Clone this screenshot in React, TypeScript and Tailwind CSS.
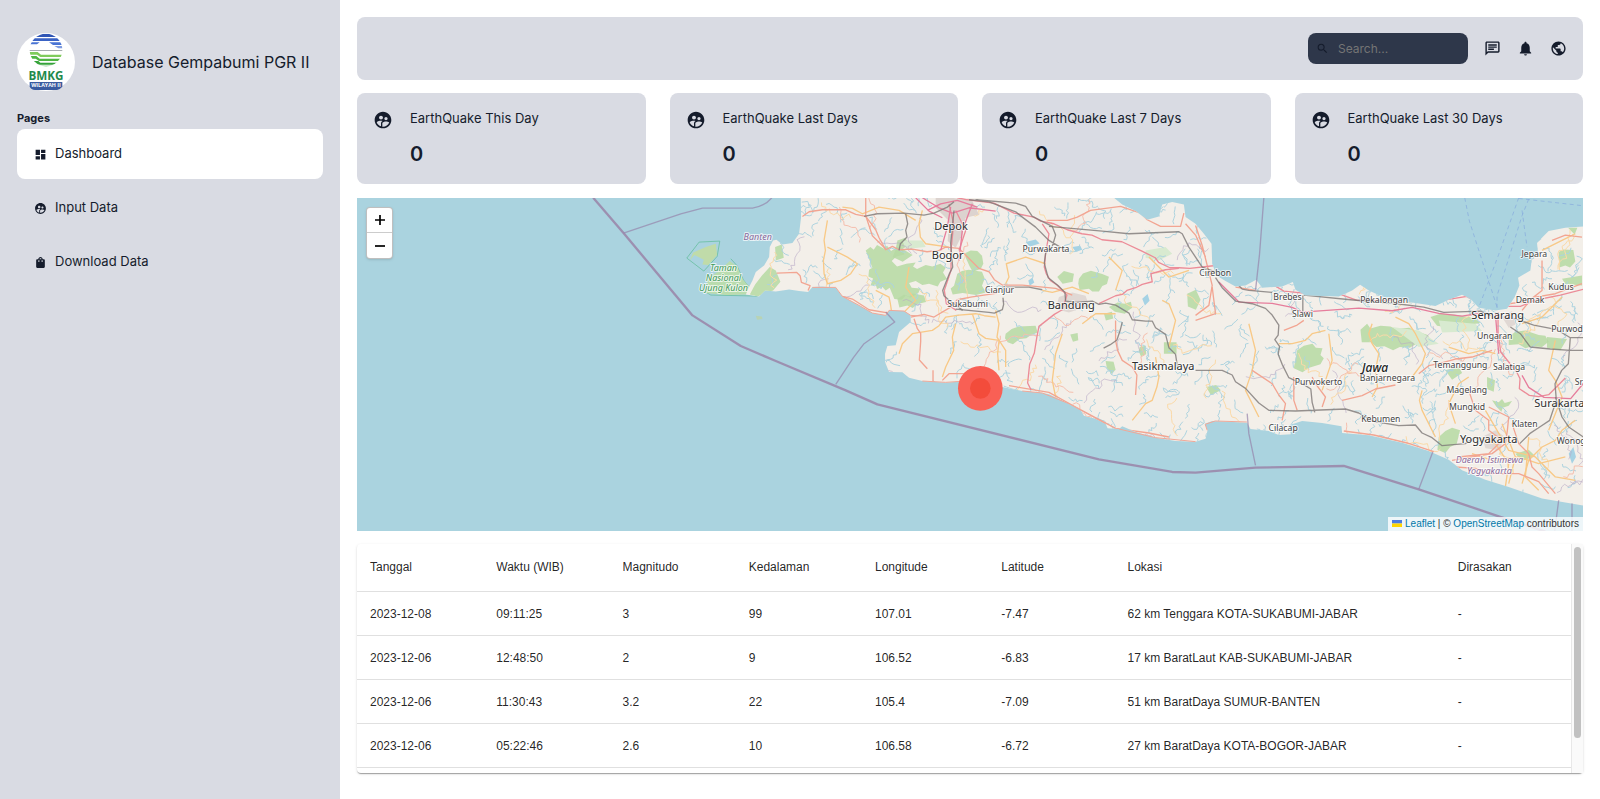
import React from "react";
import {
  MdDashboard,
  MdNotifications,
  MdOutlineChat,
  MdPublic,
  MdSearch,
  MdShoppingBag,
  MdSupervisedUserCircle,
} from "react-icons/md";

const menu = [
  { title: "Dashboard", Icon: MdDashboard, active: true },
  { title: "Input Data", Icon: MdSupervisedUserCircle, active: false },
  { title: "Download Data", Icon: MdShoppingBag, active: false },
];

const cards = [
  { title: "EarthQuake This Day", count: 0 },
  { title: "EarthQuake Last Days", count: 0 },
  { title: "EarthQuake Last 7 Days", count: 0 },
  { title: "EarthQuake Last 30 Days", count: 0 },
];

const columns = ["Tanggal", "Waktu (WIB)", "Magnitudo", "Kedalaman", "Longitude", "Latitude", "Lokasi", "Dirasakan"];

const quakes = [
  ["2023-12-08", "09:11:25", "3", "99", "107.01", "-7.47", "62 km Tenggara KOTA-SUKABUMI-JABAR", "-"],
  ["2023-12-06", "12:48:50", "2", "9", "106.52", "-6.83", "17 km BaratLaut KAB-SUKABUMI-JABAR", "-"],
  ["2023-12-06", "11:30:43", "3.2", "22", "105.4", "-7.09", "51 km BaratDaya SUMUR-BANTEN", "-"],
  ["2023-12-06", "05:22:46", "2.6", "10", "106.58", "-6.72", "27 km BaratDaya KOTA-BOGOR-JABAR", "-"],
];

function Logo() {
  return (
    <svg viewBox="0 0 174 174" className="size-[58px] shrink-0" role="img" aria-label="BMKG">
      <defs>
        <clipPath id="globe">
          <circle cx="87" cy="51" r="49" />
        </clipPath>
      </defs>
      <circle cx="87" cy="87" r="87" fill="#fff" />
      <g clipPath="url(#globe)">
        <path d="M40 2h94v10H40z" fill="#2f55b5" />
        <path d="M40 16h100v8H40z" fill="#3a62c4" />
        <path d="M38 28h30l-8 6H38zM96 28h42v8h-30z" fill="#4a74d4" />
        <path d="M112 39h30v7h-18z" fill="#7d9be0" />
        <path d="M36 52h102v2H36z" fill="#8a9096" />
        <path d="M36 57h26l10 8h66v7H70l-10-7H36z" fill="#7fcb5c" />
        <path d="M38 69h20l10 8h68l-6 7H66l-10-7H40z" fill="#4fb544" />
        <path d="M48 84h16l6 5h54v6H58zM66 98h40v5H74z" fill="#35a33a" />
      </g>
      <text x="87" y="140" textAnchor="middle" fontSize="35" className="fill-[#1f8a4c] font-['Open_Sans',sans-serif] font-bold">
        BMKG
      </text>
      <path d="M38 147h98v14q-8 9-16 10H54q-12-1-16-10z" fill="#3a5ba0" />
      <text x="87" y="163" textAnchor="middle" fontSize="16" className="fill-white font-['Open_Sans',sans-serif] font-bold">
        WILAYAH II
      </text>
    </svg>
  );
}

const land =
  "M1335 22L1336 80 1330 130 1310 158 1280 162 1262 148 1252 150 1242 170 1240 200 1225 225 1200 245 1190 270 1180 290 1170 312 1210 318 1228 300 1260 303 1300 297 1330 302 1357 305 1370 290 1400 288 1440 292 1460 318 1510 345 1550 368 1590 375 1600 360 1645 362 1665 375 1665 395 1630 425 1620 465 1595 467 1588 490 1588 515 1600 545 1640 546 1660 562 1700 572 1770 577 1820 573 1940 590 2000 602 2060 608 2080 612 2140 640 2175 658 2185 676 2220 685 2250 700 2256 714 2290 716 2300 708 2340 725 2400 742 2460 752 2520 754 2550 745 2556 720 2548 700 2570 692 2620 694 2675 697 2685 716 2740 722 2770 734 2806 732 2800 705 2840 692 2900 698 2958 708 2960 728 3040 735 3140 757 3220 782 3280 808 3320 840 3390 868 3460 890 3560 925 3684 946 3684 108 3630 112 3580 122 3562 140 3545 158 3548 190 3530 200 3525 240 3488 262 3492 285 3478 320 3455 355 3420 360 3370 352 3345 325 3320 313 3280 328 3240 347 3160 335 3080 318 3040 300 3014 283 2990 300 2950 318 2850 315 2820 298 2812 275 2780 288 2720 292 2702 268 2670 285 2640 288 2610 272 2583 255 2570 220 2568 160 2545 130 2520 100 2490 80 2485 42 2450 35 2420 42 2410 78 2375 88 2340 62 2300 42 2275 22Z";

const forests = [
  "M1530 180l14-10 10 8 10-14 20 10 10-8 12 16 20-12 16 8 4 14-24 6-14 14 16 16 28-8 28-4-8 12 12 8 26-12 20 4 24-8 16 12-8 14 12 20-20 8-8 14-26-8-20 4-20-12-20 6 8 14 26 2-6 14-24 14-14-6-12 12-22-2-14-34-12 8-10-10-16 6-4-14-16 4 8-22-14-6 2-20 10-6z",
  "M1625 150l24-8 10 20-18 14 30 18-30 20-30-14 8-20z",
  "M1625 325l20-12 16 6 10-10 34 6 6 20-26 6-14 12-16-8-24 6z",
  "M1805 250l14-8 20-4 40 6 8 20-8 22 12 20-30 8-40-6-30 4-6-18 10-8z",
  "M1825 190l20-10 20 2 14 14 4 24-8 16-24 8-10-18z",
  "M2105 260l20-18 30 8-4 24-30 6z",
  "M2170 265l12-16 24-8 34 10 20 8-6 22-14 6-10 16-20 0-10-8-28 4-4-20z",
  "M1950 430l18-14 22-8 50-2 6 20-20 8-14 10-20 2-20 16-16-6-8-12z",
  "M2260 350l26-14 20 4 20-6 4 18-12 8-10 10-30-6z",
  "M2425 456h38v34h-38zM2352 470l18-4 2 26-16 6-6-14zM2250 512l24 2 6 24-12 12-14-16zM2144 432l22-4 2 22-16 4z",
  "M2495 310l26-12 14 30-14 30-24-10z",
  "M2245 370l24-6 4 20-22 6z",
  "M3015 418l20-18 10 14 30-8 30 2 16 8 40-4 26 12 30 10 8 14-16 14-26-2-20 12-30-2-20 10-26-12-24 2-16-14-28 0z",
  "M2825 480l20-14 26-6 10 12 20 2-6 20 10 10-10 18-34 10-20 14-26-12z",
  "M3225 380l30-10 40 2 60 10 20 16-50 8-40 6-40-6z",
  "M3460 440l20-16 30-4 40 14 20 2 10 18-20 16-30-2-20 6-20-12-30 2z",
  "M3610 185l14-8 30 2 6 34-16 18-14-6-18 6z",
  "M3638 112h28l-8 20zM3250 740l20-18 20-10 24 8-10 40-20 10-14 18-24-10z",
  "M3270 540l40-12 10 20-30 20zM3395 560l24 10-4 34-20-8zM3410 630l20 6 10-10 8 12 22-6-10 14-18 6-4 12-16-16z",
  "M2552 590l30-6 14 16-30 14zM3620 265l60-10v30l-50-4zM3575 440l60 6-20 34-40-8zM3480 790l40-12 20 20-40 14z",
  "M1258 170l20-8 6 40-24 8zM1242 230l18 10 14 34-22 26-20 6-26 12-24-6 16-30 20-26z",
];

const trunks = [
  "M1805 22l30 6 80 10 60 30 60 12 20 12 40 8 40 18 44 12 30 4 30 14 60 6 60 28 40 20 10 14 34 16 28 0 32 2 70-8 60 0 52 20 40 20 60 36 60 6 110 4 50 18 90 0 60-8 90 10 90-14 60 30 100 0 50-20 70-14 80-20",
  "M2060 100l20 30-10 60-4 40 6 20 12 20 20 14 30 30-14 44-24 14-46 36-6 30-8 50-14 34-6 56 10 20",
  "M2230 340l50-24 20-4 14-12 26-8 20-10 30-8-4-24 44-12 40-4",
  "M3428 365l0 60 8 60 24 30 24 30 10 20-2 30 30 20 28 4 30-6 50-50",
  "M1780 40l14 60 -8 80 0 60-20 60 6 40 30 20",
  "M1800 60l30 60-20 60",
];

const primaries = [
  "M1340 78l20-14 40-6 70 0 30 14 30 6 30 40 10 24 20 36 20-10 20 10 40-2 44 8 36-4 20-10 40 4 60 60 30 10 16 24 24 16 60 0 100 10 50 20",
  "M1530 22l0 54 20 60 40 40",
  "M1357 300l6-14-26-10-4-20-10-10-60 2M1460 318l30 8 50 32 60 10M1665 380l40-8 30 8 50-30 20-22 40-8 80-12",
  "M1675 385l10 30 10 14 0 24-4 56 24 26M1732 540v36M1760 570l20-20 60 0M2280 390l0 60 6 30 14 30 30 20 14 24-4 60",
  "M2075 90l60 0 30-10 40-20 90-12 60 20 20 20 40 20 60 0 10-40M2490 100l30 34 30 66M2520 105l20 60 30 120-10 60-40 30",
  "M2640 290l60 10M2570 290l10 80-60 20M2845 390l-20 14-40 16M2815 560v70l10 30M2870 560l10 20 30 40-10 30M2960 630l60-14 40-20 60-12",
  "M3190 550l30-24 30-6 50-14 50-6 60-20M3460 340l80-10M3560 210l0 90-30 24-30 36M3540 320l60-10 80-30M3590 150l40-16 50 6",
  "M3340 600l20 60 40 30 0 30 40 30-40 40-90 10M3400 650l60 30-4 40-6 40-40 30-120 20M3470 700l20 60 30 30 10 40 20 20 50 60M3300 830l60 4 40 16 90 0 60 24 30 36",
  "M2690 540l60 40 20 34 20 26-10 50M2440 740l-60-12-100-14-120-64-80-44-120-20",
  "M2965 722l90 12 100 24 80 26",
];

const minors = [
  "M1415 90l-10 60 4 30-6 30 2 40 10 30 40-10 30-20 20-30-30-20-60-30M1460 50l30 4 30 16 50-20 60 10 50 30M1700 60l-10 40 4 40 16 20 70 10",
  "M1560 300l40 20 4 20 6 40M1600 370l60 10M1630 490l10-30 30-30 60-10 20-14 20-26 40-6 50-4 26 6 34 4M1800 400l-10 40 4 40-24 50-10 30M1850 370l20 60 20 14 40 6-4 40 4 50M1920 360l10 40-6 40 26 40 0 50",
  "M2120 430l-20 60-10 80 10 50-30 50M2400 500l10 60-6 30-14 40-20 10-40 50M2180 400l40-30 60 0M1950 280l10-20-8-40 58-20 60 20M2260 200l40 40-20 60",
  "M2680 400l20 80-10 60-20 60 40 80M2770 460l40 0 40-10 20-20 40-10M2920 430l10 80-30 90M3050 400l-10 30 10 30 20 30-10 50 6 50-16 30M3120 380l40 20 20 30 30 60-10 30-30 40",
  "M3280 470l60 20 40-10 40 10M3200 600l-8 30 8 30 40 80M3340 560l-30 20-30 60 20 60M3600 450l-20 90 20 30 20 50-40 100M3500 880l20-70 40-40 40-20 20-30 40-30",
  "M2420 330l20 10 20 50-20 80M2380 200l60 60 60-20M3560 180l60-30 40-20M3620 320l-60 60-60 20",
  "M3360 740l60 20 40 60-10 70M3440 700l40 100-20 80M3520 740l-10 120 40 40M3390 660l70 120 80 20 60 60 60 10M3350 790l60 20 80-10 60 20 80-20M2060 300l30 6 60-16 50 20M1660 230l-10 60 30 40-40 40",
];

const rails = [
  "M1525 78l40-8 80-2 60 6 30-6 40-18 20-16M1650 70l6 30-6 20 4 20-20 20-4 20M1795 60l-10 100 6 70-10 20-20 50 4 16 16 14 40 30M1840 28l60 6 80 30 20 16 40 30 40 40 50 30M1860 28l120 10 30 10 20 30 60 30 10 26-10 34-20 20-4 30 8 30 4 14 30 24 20 20 2 26 30 4 50-4 20 10 20-4 30 6 40 24 10 20 40 4 20 0 10 20 30 20 10 40 20 20 6 40",
  "M2080 108l160 14 80 8 150-6 10 6 20 40 20 30 20 30 60 22 30 14 30 30 20 4 70 6M2580 262l20 30 40 40 50 8 40 14 20 20 20 30-2 30-10 14 14 20-4 24 12 30 20 40 50 24 16 10 4 40 8 30M2520 540l80 0 30 14 10 20 30 20 40 44 30 22 80 2 150-6 40 12 40 24 80 14 50-2 20 24 30 14 30 24 70-6 30-20",
  "M2845 314l140 14 140 12 80 10 60 16 110-4 30 14M2842 315v50M3475 384l60 20 70 14 40 24 40 0M3465 410l30 20 30 40 60 6 60 4 40 0M3645 440l-6 80-20 20-20 40 4 50-20 60-30 20-30 20-30 30M3600 620l20 60 20 30 44 30",
  "M1800 356l100 10 16 2 24-10 4-16-2-20M1940 290l80 0 40 8M2300 395l-6 24-10 30-20 14-20 10",
];

const motorways = [
  "M1680 22l40 40 40 20M1700 22l50 30 40 16 50-16 80 10M1715 60l40-20 50-10 60 20M1785 50l-10 60-20 70M1850 40l-30 80-10 90",
  "M2590 275l60 60 100 4 60 12 30 14 170-12 100 8 60-10 80 18 70 8 50-8M3420 370l10 120M3500 555l20 36 46 30 80 4 50-60",
];

type Squiggles = { rivers: string; tracks: string; borders: string; lanes: string };

// Fills the land with small streams and lanes; the seed keeps every render alike.
function buildSquiggles(): Squiggles {
  let seed = 9173;
  const next = () => {
    seed = (seed * 1664525 + 1013904223) % 4294967296;
    return seed / 4294967296;
  };
  const make = (count: number, steps: number, size: number) => {
    let d = "";
    for (let i = 0; i < count; i++) {
      const x = 1250 + next() * 2430;
      const y = 22 + next() * 900;
      const heading = next() * Math.PI * 2;
      d += `M${x.toFixed(0)} ${y.toFixed(0)}`;
      for (let s = 0; s < steps; s++) {
        const angle = heading + (next() - 0.5) * 2.4;
        d += `l${(Math.cos(angle) * size).toFixed(0)} ${(Math.sin(angle) * size).toFixed(0)}`;
      }
    }
    return d;
  };
  return { rivers: make(760, 6, 9), tracks: make(70, 12, 12), borders: make(50, 12, 12), lanes: make(30, 12, 12) };
}

const squiggles = buildSquiggles();

const cities: [string, number, number][] = [
  ["Depok", 1786, 118],
  ["Bogor", 1776, 205],
  ["Bandung", 2147, 355],
  ["Tasikmalaya", 2423, 540],
  ["Semarang", 3427, 387],
  ["Yogyakarta", 3400, 758],
  ["Surakarta", 3612, 650],
];

const towns: [string, number, number][] = [
  ["Purwakarta", 2071, 186],
  ["Cianjur", 1932, 308],
  ["Sukabumi", 1836, 351],
  ["Cirebon", 2579, 257],
  ["Brebes", 2796, 329],
  ["Slawi", 2841, 380],
  ["Pekalongan", 3086, 338],
  ["Jepara", 3537, 201],
  ["Kudus", 3617, 300],
  ["Demak", 3524, 339],
  ["Ungaran", 3418, 447],
  ["Temanggung", 3315, 533],
  ["Salatiga", 3461, 540],
  ["Banjarnegara", 3096, 572],
  ["Purwokerto", 2889, 583],
  ["Magelang", 3334, 607],
  ["Mungkid", 3335, 660],
  ["Kebumen", 3076, 694],
  ["Klaten", 3508, 710],
  ["Cilacap", 2783, 722],
];

const edgeTowns: [string, number, number][] = [
  ["Purwod", 3588, 425],
  ["Sr", 3658, 583],
  ["Wonog", 3604, 762],
];

function QuakeMap() {
  return (
    <section className="relative aspect-[1227/333] overflow-hidden bg-[#aad3df]" aria-label="Map">
      <svg viewBox="3 22 3680 1000" preserveAspectRatio="xMidYMid slice" className="size-full" fill="none" strokeLinejoin="round">
        <defs>
          <clipPath id="land">
            <path d={land} />
          </clipPath>
        </defs>
        <g stroke="#5dbb96" strokeWidth="3" strokeOpacity="0.7">
          <path d="M1030 155l62-3-8 46-40 44-51-39z" />
          <path d="M1125 205l18 20 20 44 18 22 24 26-140-3-20-12" />
        </g>
        <path d="M1050 170l30-10 4 34-26 30-18-2 4-14-28-14-14 16 10-24z" fill="#c0dba9" />
        <path d="M1122 212l22 16 18 40 18 20-8 24-60 2-62-6 6-44 30-20z" fill="#b9dcae" />
        <path d="M1200 376l18 2 2 8-16 2z" fill="#b8d3b4" />
        <path d={land} fill="#f3efe9" />
        <g clipPath="url(#land)">
          <g fill="#b5d9a2" fillOpacity="0.85">
            {forests.map((d) => (
              <path key={d} d={d} />
            ))}
          </g>
          <path
            d="M2370 180l60-10 20 20-40 20-40-8zM1640 150l60 0 10 20-60 6zM3110 410l80 10 60 40-60 10zM3250 390l110 10 20 22-120 4z"
            fill="#d8ead0"
          />
          <path
            d="M2010 155l30-8 12 12-30 10zM2018 270l12-8 6 14-14 10zM2360 325l16-14 6 20-14 14zM2150 170l24-4 6 12-20 6zM3640 790l14-20 8 30-12 20z"
            fill="#a5d2e4"
          />
          <path d={squiggles.rivers} stroke="#add3df" strokeWidth="3" />
          <path d={squiggles.borders} stroke="#b9aac6" strokeWidth="3" strokeOpacity="0.6" />
          <path d={squiggles.tracks} stroke="#fad9a8" strokeWidth="3" />
          <path d={squiggles.lanes} stroke="#f5bfae" strokeWidth="3" />
          <path d="M1740 22l50 0 60 10 20 40-40 10-10 50-20 40-24-20 4-60-40-40z" fill="#dcd3cf" />
          <path
            d="M2110 320l40-14 40 10 10 30-60 20-40-10zM3440 380l30-18 10 40-20 10zM3380 740l40-20 30 20-20 40-40-6z"
            fill="#e0d8d4"
          />
          <g stroke="#f8c987" strokeWidth="4">
            {minors.map((d) => (
              <path key={d} d={d} />
            ))}
          </g>
          <g stroke="#f2a592" strokeWidth="4">
            {primaries.map((d) => (
              <path key={d} d={d} />
            ))}
          </g>
          <g stroke="#ec8c98" strokeWidth="4">
            {trunks.map((d) => (
              <path key={d} d={d} />
            ))}
          </g>
          <g stroke="#e67d9c" strokeWidth="4">
            {motorways.map((d) => (
              <path key={d} d={d} />
            ))}
          </g>
          <g stroke="#7d7877" strokeWidth="4" strokeOpacity="0.8">
            {rails.map((d) => (
              <path key={d} d={d} />
            ))}
          </g>
        </g>
        <path
          d="M1370 291l70 0 20 27 50 27 40 23 40 7 10-15 45 2 20 13 35 2M1700 572l70 4 60-4M2000 602l60 6 80 32 110 60M2290 716l110 26 120 12M2555 720l-6-18 30-10 95 3"
          stroke="#f0a898"
          strokeWidth="3"
        />
        <path
          d="M712 22l91 106 207 247 145 92 105 45 210 88 95 42 665 165 220 38 70 2 180-15 265-5 225 70 240 81 140 46"
          stroke="#9a84a8"
          strokeWidth="7"
          strokeOpacity="0.85"
        />
        <g stroke="#9585ab" strokeWidth="4" strokeOpacity="0.7">
          <path d="M803 128l172-58 65-17h150q38-6 58-31" />
          <path d="M1590 365l27 30-92 65-32 42-53 80M2725 22l-13 170-12 108M2675 670l5 60 20 95M3232 785l-42 112M3610 930l-12 92M3650 940v82" />
        </g>
        <path
          d="M3328 22l14 70 83 258M3490 22l-60 170-60 160M3520 26l-20 50-75 240v40M3500 60l15 110M3490 24l194 22"
          stroke="#8aaedd"
          strokeOpacity="0.8"
          strokeWidth="3"
          strokeDasharray="12 10"
        />
        <g
          className="font-['Noto_Sans',sans-serif]"
          textAnchor="middle"
          stroke="#fff"
          strokeOpacity="0.7"
          strokeWidth="6"
          paintOrder="stroke"
        >
          <g fontSize="26" fill="#444">
            {towns.map(([name, x, y]) => (
              <text key={name} x={x} y={y}>
                {name}
              </text>
            ))}
            <g textAnchor="start">
              {edgeTowns.map(([name, x, y]) => (
                <text key={name} x={x} y={y}>
                  {name}
                </text>
              ))}
            </g>
          </g>
          <g fontSize="33" fill="#2d2d2d">
            {cities.map(([name, x, y]) => (
              <text key={name} x={x} y={y}>
                {name}
              </text>
            ))}
          </g>
          <g className="italic" fontSize="27">
            <text x="3059" y="545" fontSize="36" fill="#222" className="font-medium">
              Jawa
            </text>
            <g fill="#8a6a9c">
              <text x="1206" y="148">Banten</text>
              <text x="3402" y="819">Daerah Istimewa</text>
              <text x="3402" y="852">Yogyakarta</text>
            </g>
            <g fill="#3f9a5a">
              <text x="1103" y="243">Taman</text>
              <text x="1103" y="273">Nasional</text>
              <text x="1103" y="303">Ujung Kulon</text>
            </g>
          </g>
        </g>
        <circle cx="1874" cy="594" r="67" fill="#f96055" />
        <circle cx="1874" cy="594" r="31" fill="#f34c3b" />
      </svg>

      <div className="absolute left-[9px] top-[9px] flex flex-col rounded-sm border border-black/25 bg-white text-black shadow-sm">
        <button type="button" aria-label="Zoom in" className="flex size-[25px] items-center justify-center border-b border-[#ccc]">
          <svg viewBox="0 0 10 10" className="size-[10px]" stroke="currentColor" strokeWidth="1.7">
            <path d="M0 5h10M5 0v10" />
          </svg>
        </button>
        <button type="button" aria-label="Zoom out" className="flex size-[25px] items-center justify-center">
          <svg viewBox="0 0 10 10" className="size-[10px]" stroke="currentColor" strokeWidth="1.7">
            <path d="M0 5h10" />
          </svg>
        </button>
      </div>

      <div className="absolute bottom-0 right-0 flex h-[14px] items-center whitespace-pre bg-white/80 px-1 font-['Liberation_Sans',sans-serif] text-[10px] text-[#333]">
        <a href="https://leafletjs.com" className="flex items-center gap-[3px] text-[#0078a8]">
          <svg viewBox="0 0 10 7" className="h-[7px] w-[10px]" aria-hidden="true">
            <path fill="#4C7BE1" d="M0 0h10v3.5H0z" />
            <path fill="#FFD500" d="M0 3.5h10V7H0z" />
          </svg>
          Leaflet
        </a>
        {" | © "}
        <a href="https://www.openstreetmap.org/copyright" className="text-[#0078a8]">
          OpenStreetMap
        </a>
        {" contributors"}
      </div>
    </section>
  );
}

export default function App() {
  return (
    <div className="flex min-h-screen bg-white font-['Inter',sans-serif] text-[#151c2c]">
      <aside className="w-[340px] shrink-0 bg-[#d9dbe3] px-[17px] pt-[33px]">
        <div className="flex items-center gap-[17px]">
          <Logo />
          <span className="whitespace-nowrap text-[16px] leading-6">Database Gempabumi PGR II</span>
        </div>
        <nav aria-label="Pages" className="mt-[18px]">
          <h2 className="text-[11px] font-bold leading-[18px]">Pages</h2>
          <ul className="mt-[2px] flex flex-col gap-1">
            {menu.map(({ title, Icon, active }) => (
              <li key={title}>
                <a
                  href="#"
                  className={
                    active
                      ? "flex h-[50px] items-center gap-2 rounded-lg bg-white px-[17px] text-[13px]"
                      : "flex h-[50px] items-center gap-2 rounded-lg px-[17px] text-[13px]"
                  }
                >
                  <Icon className="size-[13px]" />
                  {title}
                </a>
              </li>
            ))}
          </ul>
        </nav>
      </aside>

      <main className="min-w-0 flex-1 p-[17px]">
        <header className="flex items-center justify-end gap-4 rounded-lg bg-[#d9dbe3] p-4">
          <label className="flex h-[31px] w-[160px] items-center gap-[9px] rounded-lg bg-[#2e374a] px-2">
            <MdSearch className="size-[13px] shrink-0" />
            <input
              type="text"
              aria-label="Search"
              placeholder="Search..."
              className="min-w-0 flex-1 bg-transparent text-[12px] text-white outline-none placeholder:text-[#757575]"
            />
          </label>
          <div className="flex items-center gap-4">
            <button type="button" aria-label="Messages">
              <MdOutlineChat className="size-[17px]" />
            </button>
            <button type="button" aria-label="Notifications">
              <MdNotifications className="size-[17px]" />
            </button>
            <button type="button" aria-label="Language">
              <MdPublic className="size-[17px]" />
            </button>
          </div>
        </header>

        <section className="mt-[13px] grid grid-cols-4 gap-6">
          {cards.map((card) => (
            <article key={card.title} className="flex gap-[17px] rounded-lg bg-[#d9dbe3] px-4 py-[17px]">
              <MdSupervisedUserCircle className="size-5 shrink-0" />
              <div className="flex flex-col gap-[15px]">
                <h3 className="text-[13px] leading-[17px]">{card.title}</h3>
                <span className="text-[20px] font-semibold leading-[25px]">{card.count}</span>
              </div>
            </article>
          ))}
        </section>

        <div className="mt-[14px]">
          <QuakeMap />
        </div>

        <section className="mt-[13px] flex h-[229px] rounded-sm bg-white shadow-[0_2px_1px_-1px_rgba(0,0,0,0.2),0_1px_1px_rgba(0,0,0,0.14),0_1px_3px_rgba(0,0,0,0.12)]">
          <div className="min-w-0 flex-1 overflow-hidden">
            <table className="w-full table-fixed border-collapse text-left font-['Liberation_Sans',sans-serif] text-[12px] text-black/87">
              <thead>
                <tr className="h-12 border-b border-[#e0e0e0]">
                  {columns.map((name) => (
                    <th
                      key={name}
                      scope="col"
                      className={name === "Lokasi" ? "px-[13px] font-normal" : "w-[10.4%] px-[13px] font-normal"}
                    >
                      {name}
                    </th>
                  ))}
                </tr>
              </thead>
              <tbody>
                {quakes.map((row) => (
                  <tr key={row[0] + row[1]} className="h-11 border-b border-[#e0e0e0]">
                    {row.map((value, i) => (
                      <td key={columns[i]} className="px-[13px]">
                        {value}
                      </td>
                    ))}
                  </tr>
                ))}
              </tbody>
            </table>
          </div>
          <div className="w-3 border-l border-[#e8e8e8] bg-[#fafafa] px-[2px] pt-[3px]" aria-hidden="true">
            <div className="h-[191px] rounded-full bg-[#c1c1c1]" />
          </div>
        </section>
      </main>
    </div>
  );
}
